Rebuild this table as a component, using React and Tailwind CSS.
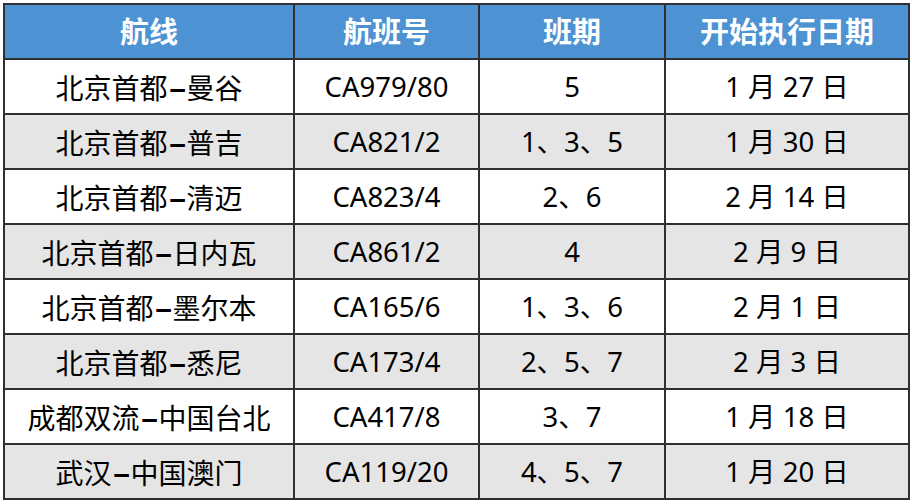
import React from "react";

const rows = [
  ["北京首都-曼谷", "CA979/80", "5", "1 月 27 日"],
  ["北京首都-普吉", "CA821/2", "1、3、5", "1 月 30 日"],
  ["北京首都-清迈", "CA823/4", "2、6", "2 月 14 日"],
  ["北京首都-日内瓦", "CA861/2", "4", "2 月 9 日"],
  ["北京首都-墨尔本", "CA165/6", "1、3、6", "2 月 1 日"],
  ["北京首都-悉尼", "CA173/4", "2、5、7", "2 月 3 日"],
  ["成都双流-中国台北", "CA417/8", "3、7", "1 月 18 日"],
  ["武汉-中国澳门", "CA119/20", "4、5、7", "1 月 20 日"],
];

// route name with the wide dash used in the original
const Route = ({ text }) => {
  const [from, to] = text.split("-");
  return (
    <>
      {from}
      <span className="inline-block w-[19px] text-center scale-x-[1.9] font-bold">-</span>
      {to}
    </>
  );
};

const App = () => {
  return (
    <div className="w-[912px] h-[504px] bg-white pt-[3px] pl-[3px] font-['Noto_Sans','Noto_Sans_CJK_SC',sans-serif]">
      <table className="border-collapse table-fixed w-[905px] leading-none">
        <colgroup>
          <col className="w-[290px]" />
          <col className="w-[185px]" />
          <col className="w-[186px]" />
          <col className="w-[244px]" />
        </colgroup>
        <thead>
          <tr className="h-[55px] bg-[#4d93d3] text-white text-[29px]">
            {["航线", "航班号", "班期", "开始执行日期"].map((h) => (
              <th key={h} className="border-2 border-[#2f2f2f] font-bold text-center">
                {h}
              </th>
            ))}
          </tr>
        </thead>
        <tbody>
          {rows.map((r, i) => (
            <tr
              key={i}
              className={i % 2 === 0 ? "h-[55px] bg-white text-black text-[27.5px]" : "h-[55px] bg-[#e6e5e6] text-black text-[27.5px]"}
            >
              <td className="border-2 border-[#2f2f2f] text-center text-[28px] font-['Noto_Sans_CJK_SC',sans-serif] whitespace-nowrap">
                <Route text={r[0]} />
              </td>
              {r.slice(1).map((c, j) => (
                <td key={j} className="border-2 border-[#2f2f2f] text-center">
                  {c}
                </td>
              ))}
            </tr>
          ))}
        </tbody>
      </table>
    </div>
  );
};

export default App;
